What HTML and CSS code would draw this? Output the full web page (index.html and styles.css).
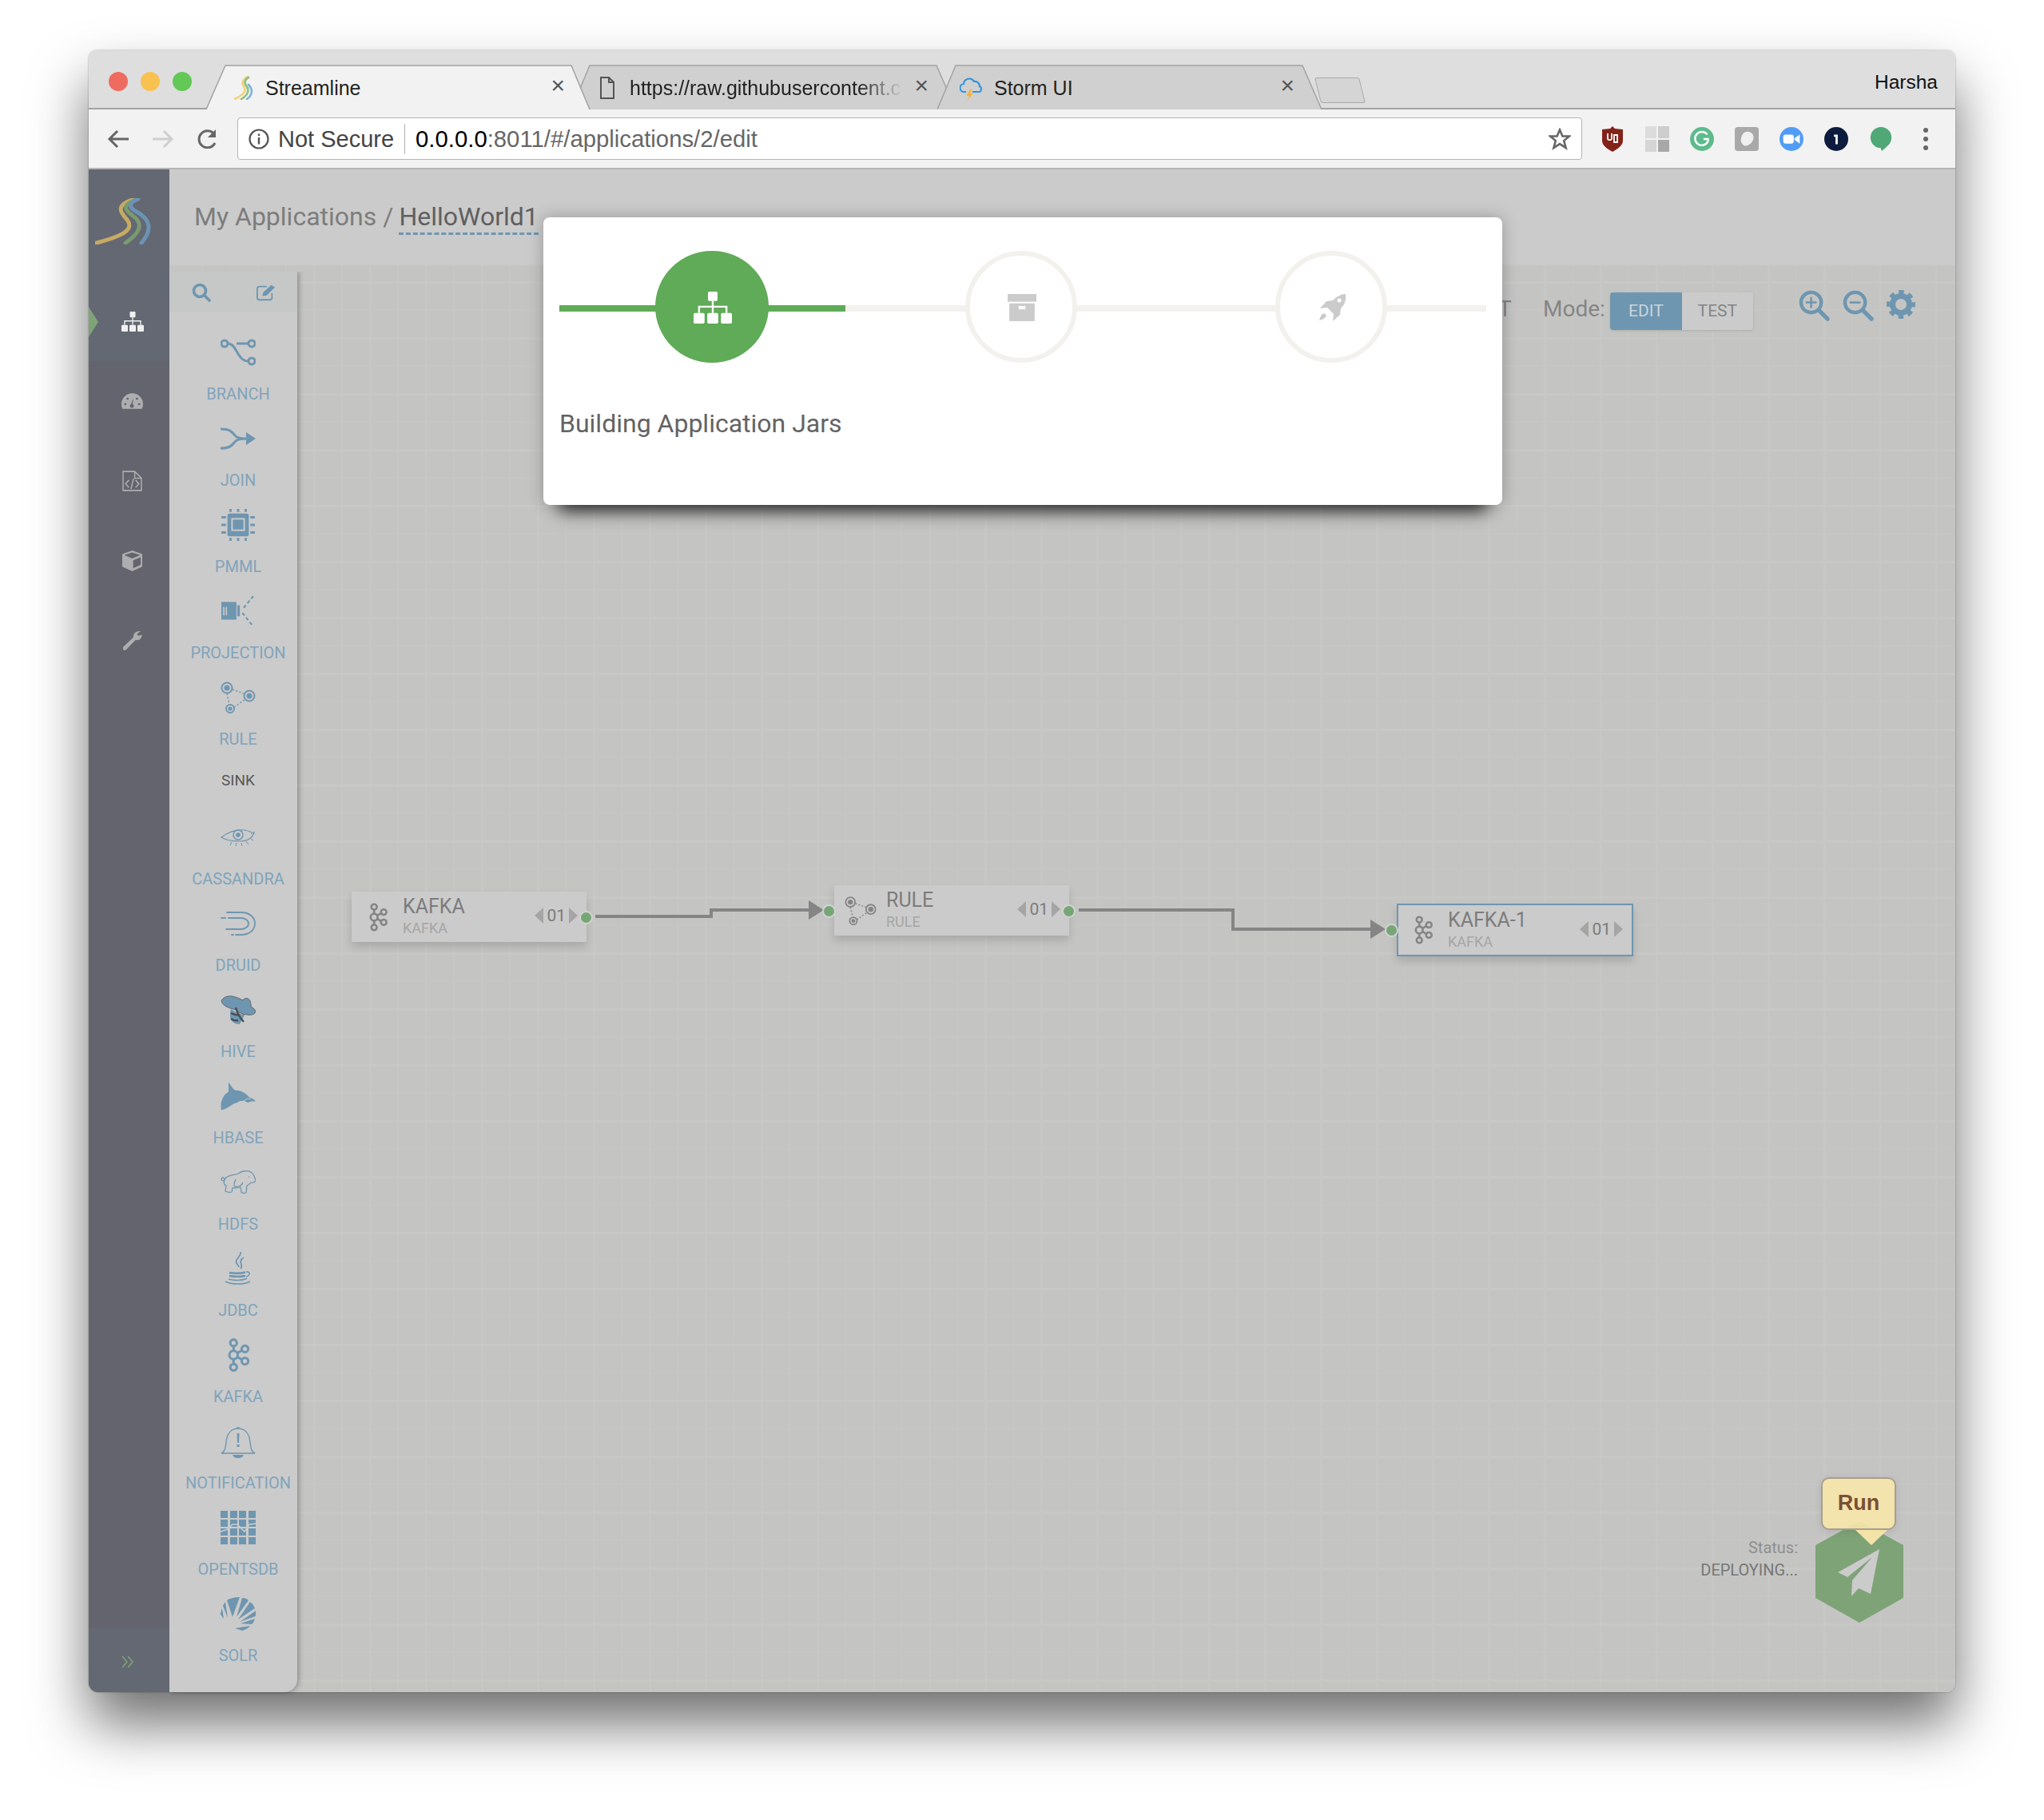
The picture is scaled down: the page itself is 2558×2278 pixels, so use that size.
FILE: index.html
```html
<!DOCTYPE html>
<html lang="en">
<head>
    <meta charset="UTF-8">
    <title>Streamline</title>
    <link rel="stylesheet" href="styles.css">
</head>
<body>
    <svg class="defs" width="0" height="0">
        <symbol id="kafka" viewBox="0 0 30 44">
            <g fill="none" stroke="currentColor" stroke-width="3.2">
                <circle cx="9" cy="6" r="4.300"/><circle cx="9" cy="22" r="5.500"/><circle cx="9" cy="38" r="4.300"/>
                <circle cx="24" cy="14" r="4.300"/><circle cx="24" cy="30" r="4.300"/>
                <path d="M9 10v7M9 27v7M13 20l7-4M13 24l7 4"/>
            </g>
        </symbol>
        <symbol id="rule" viewBox="0 0 44 40">
            <g fill="none" stroke="currentColor">
                <circle cx="8" cy="8" r="6.5" stroke-width="2"/><circle cx="36" cy="18" r="6.5" stroke-width="2"/><circle cx="12" cy="34" r="5" stroke-width="2"/>
                <path d="M15 10l14 5M8 15l3 13M17 32l13-9" stroke-width="1.6" stroke-dasharray="2 2.5"/>
            </g>
            <g fill="currentColor"><circle cx="8" cy="8" r="3.5"/><circle cx="36" cy="18" r="3.5"/><circle cx="12" cy="34" r="2.6"/></g>
        </symbol>
        <symbol id="sitemap" viewBox="0 0 28 24" preserveAspectRatio="none">
            <g fill="currentColor">
                <rect x="10.5" y="0" width="7" height="7" rx="1"/>
                <rect x="0" y="16" width="8" height="8" rx="1"/><rect x="10" y="16" width="8" height="8" rx="1"/><rect x="20" y="16" width="8" height="8" rx="1"/>
                <path d="M13.3 7h1.400v3.600H24.700V16h-1.400v-4H14.700v4h-1.400v-4H4.700v4H3.300V10.600h10z"/>
            </g>
        </symbol>
    </svg>

    <div class="window">
        <div class="tabstrip">
            <div class="lights">
                <span class="light red"></span>
                <span class="light yellow"></span>
                <span class="light green"></span>
            </div>
            <div class="tabs">
                <div class="tab active">
                    <svg class="shape" viewBox="0 0 482 56" preserveAspectRatio="none"><path d="M0 56h1L25 1h433l23 55h1" fill="#f2f2f2" stroke="#a3a3a3" stroke-width="1.5"/></svg>
                    <svg class="fav" viewBox="0 0 28 30">
                        <g fill="none" stroke-width="2.6" stroke-linecap="round">
                            <path d="M1 29C10 24 17 20 12 13 9 9 11 4 17 1" stroke="#f0d27a"/>
                            <path d="M9 29C17 24 20 18 15 12 12 8 14 4 18 2" stroke="#8cc07e"/>
                            <path d="M16 29C23 24 24 17 18 11" stroke="#7fb3dc"/>
                        </g>
                    </svg>
                    <span class="tab-title">Streamline</span>
                    <span class="tab-close">×</span>
                </div>
                <div class="tab second">
                    <svg class="shape" viewBox="0 0 482 56" preserveAspectRatio="none"><path d="M0 56L23 1h434l24 55" fill="#d0d0d0" stroke="#a3a3a3" stroke-width="1.5"/></svg>
                    <svg class="fav doc" viewBox="0 0 20 30"><path d="M2 2h10l6 6v20H2zM12 2v6h6" fill="none" stroke="#555" stroke-width="2"/></svg>
                    <span class="tab-title faded">https://raw.githubusercontent.c</span>
                    <span class="tab-close">×</span>
                </div>
                <div class="tab third">
                    <svg class="shape" viewBox="0 0 482 56" preserveAspectRatio="none"><path d="M0 56L23 1h434l24 55" fill="#d0d0d0" stroke="#a3a3a3" stroke-width="1.5"/></svg>
                    <svg class="fav cloud" viewBox="0 0 30 32">
                        <path d="M8 21H6a5 5 0 0 1-1-10 7 7 0 0 1 13-3 6 6 0 0 1 7 6 4 4 0 0 1 0 7h-9" fill="none" stroke="#2f95dc" stroke-width="2.2"/>
                        <path d="M13 18l-5 8h4l-3 6 8-9h-4l3-5z" fill="#f5b43c"/>
                    </svg>
                    <span class="tab-title">Storm UI</span>
                    <span class="tab-close">×</span>
                </div>
                <div class="newtab"></div>
            </div>
            <span class="profile">Harsha</span>
        </div>

        <div class="toolbar">
            <div class="navbtns">
                <svg viewBox="0 0 28 24"><path d="M27 12H3M13 2L3 12l10 10" fill="none" stroke="#666" stroke-width="3"/></svg>
                <svg viewBox="0 0 28 24"><path d="M1 12h24M15 2l10 10-10 10" fill="none" stroke="#cfcfcf" stroke-width="3"/></svg>
                <svg viewBox="0 0 28 24"><path d="M23 17a10.5 10.5 0 1 1-1-11" fill="none" stroke="#666" stroke-width="3"/><path d="M24 0v10H14z" fill="#666"/></svg>
            </div>
            <div class="omnibox">
                <svg class="info" viewBox="0 0 26 26"><circle cx="13" cy="13" r="11.5" fill="none" stroke="#555" stroke-width="2.2"/><path d="M11.8 11h2.4v8.5h-2.4zM11.8 6.500h2.400v2.500h-2.400z" fill="#555"/></svg>
                <span class="secure">Not Secure</span>
                <span class="url"><b>0.0.0.0</b>:8011/#/applications/2/edit</span>
                <svg class="star" viewBox="0 0 28 28"><path d="M14 2.500l3.400 8h8.600l-6.800 5.600 2.400 9-7.600-5-7.600 5 2.400-9L2 10.500h8.600z" fill="none" stroke="#666" stroke-width="2.600"/></svg>
            </div>
            <div class="extensions">
                <svg viewBox="0 0 30 32"><path d="M15 0l3 3 10 1v14c0 6-6 10-13 14C8 28 2 24 2 18V4l10-1z" fill="#82231a"/><path d="M9 9v7a3 3 0 0 0 5 0V9M17 11h4v9h-4z" fill="none" stroke="#fff" stroke-width="1.800"/></svg>
                <svg viewBox="0 0 30 32"><rect width="14" height="15" fill="#dcdcdc"/><rect x="16" width="14" height="15" fill="#cdcdcd"/><rect y="17" width="14" height="15" fill="#d5d5d5"/><rect x="16" y="17" width="14" height="15" fill="#a8a8a8"/></svg>
                <svg viewBox="0 0 32 32"><circle cx="16" cy="16" r="16" fill="#5dbb8d"/><path d="M23 10a9 9 0 1 0 1 9v-3h-6" fill="none" stroke="#fff" stroke-width="2.600"/></svg>
                <svg viewBox="0 0 32 32"><rect width="32" height="32" rx="4" fill="#a9a9a9"/><path d="M17 6c5 0 9 4 8 9-1 6-7 11-12 10-4-2-6-7-4-12 1-4 4-7 8-7z" fill="#f0f0f0"/></svg>
                <svg viewBox="0 0 32 32"><circle cx="16" cy="16" r="16" fill="#519df5"/><rect x="5" y="10" width="14" height="12" rx="3" fill="#fff"/><path d="M20 15l7-5v12l-7-5z" fill="#fff"/></svg>
                <svg viewBox="0 0 32 32"><circle cx="16" cy="16" r="16" fill="#0d1b3e"/><path d="M13 10h5v13h-3V13h-2z" fill="#fff"/></svg>
                <svg viewBox="0 0 32 32"><circle cx="16" cy="14" r="14" fill="#4fa876"/><path d="M15 26h9l-7 6z" fill="#4fa876"/></svg>
                <svg class="menu-dots" viewBox="0 0 8 30"><g fill="#666"><circle cx="4" cy="4" r="3"/><circle cx="4" cy="15" r="3"/><circle cx="4" cy="26" r="3"/></g></svg>
            </div>
        </div>

        <div class="app">
            <nav class="nav">
                <div class="logo">
                    <svg viewBox="0 0 72 58">
                        <g fill="none" stroke-linecap="round">
                            <path d="M2 56C24 50 52 42 40 27 30 16 26 8 50 1" stroke="#c6ab63" stroke-width="5"/>
                            <path d="M38 56C56 44 62 32 46 21 36 14 34 8 52 2" stroke="#7a9a70" stroke-width="5"/>
                            <path d="M58 56C72 40 70 26 50 16 42 11 42 6 54 1" stroke="#6b93b5" stroke-width="5"/>
                        </g>
                    </svg>
                </div>
                <div class="nav-item current"><svg class="i-site"><use href="#sitemap"/></svg></div>
                <div class="nav-item">
                    <svg viewBox="0 0 28 20"><path d="M14 0a14 14 0 0 1 14 14c0 3-1 5-1.500 6H1.500C1 19 0 17 0 14A14 14 0 0 1 14 0z" fill="currentColor"/><path d="M15.500 6l-1 8a2.500 2.500 0 1 1-2 0z" fill="#64646e"/><g fill="#64646e"><circle cx="5" cy="14" r="1.500"/><circle cx="8" cy="7" r="1.500"/><circle cx="20" cy="7" r="1.500"/><circle cx="23" cy="14" r="1.500"/></g></svg>
                </div>
                <div class="nav-item">
                    <svg class="nav-tall" viewBox="0 0 24 22" preserveAspectRatio="none"><path d="M1 1h14l8 7v13H1zM15 1v7h8" fill="none" stroke="currentColor" stroke-width="1.400"/><path d="M8 10l-4 4 4 4M16 10l4 4-4 4M13.500 8.500l-3 11" fill="none" stroke="currentColor" stroke-width="1.400"/></svg>
                </div>
                <div class="nav-item">
                    <svg class="nav-tall" viewBox="0 0 26 20" preserveAspectRatio="none"><path d="M13 0l13 3.500v12L13 20 0 15.500v-12zM2.500 4.500L13 7.700 23.500 4.500 13 2zM14.200 9.500v7.700l9.800-3.300V6.600z" fill="currentColor" fill-rule="evenodd"/></svg>
                </div>
                <div class="nav-item">
                    <svg class="nav-tall" viewBox="0 0 26 22" preserveAspectRatio="none"><path d="M25.500 4.500c.5 3.500-3.500 7-8 5.500L5 20.500c-2.500 2-5.500-1-3.500-3.200L14.500 7.500C14 3.500 18 0 24 1c-2 .8-4.500 2-4.500 3.200 0 1.400 2.500 2 6 .3z" fill="currentColor"/></svg>
                </div>
                <div class="nav-bottom">
                    <svg viewBox="0 0 16 16"><path d="M1 1l6 7-6 7M8 1l6 7-6 7" fill="none" stroke="#7ea377" stroke-width="1.600"/></svg>
                </div>
            </nav>

            <main class="main">
                <header class="crumbs">
                    <span class="crumb-root">My Applications /</span>
                    <span class="crumb-name">HelloWorld1</span>
                </header>

                <div class="canvas">
                    <aside class="palette">
                        <div class="palette-search">
                            <svg viewBox="0 0 24 24"><circle cx="10" cy="10" r="7.500" fill="none" stroke="currentColor" stroke-width="3.600"/><path d="M15.500 15.500L22 22" stroke="currentColor" stroke-width="3.600" stroke-linecap="round"/></svg>
                            <svg viewBox="0 0 26 22"><path d="M14 3H4a3 3 0 0 0-3 3v12a3 3 0 0 0 3 3h14a3 3 0 0 0 3-3v-6" fill="none" stroke="currentColor" stroke-width="2"/><path d="M8 16l1-5L20 1l5 3-11 11z" fill="currentColor"/></svg>
                        </div>
                        <div class="palette-list">
                            <div class="tool">
                                <svg viewBox="0 0 44 34"><g fill="none" stroke="currentColor" stroke-width="3"><circle cx="5" cy="6" r="4"/><circle cx="39" cy="6" r="4"/><circle cx="39" cy="28" r="4"/><path d="M9 6c12 0 11 22 26 22M20 6h15"/></g></svg>
                                <span>BRANCH</span>
                            </div>
                            <div class="tool">
                                <svg viewBox="0 0 44 28"><path d="M1 2c10 0 13 3 17 8 2 3 6 4 16 4M1 26c10 0 13-3 17-8 2-3 6-4 16-4" fill="none" stroke="currentColor" stroke-width="3" stroke-linecap="round"/><path d="M32 6l12 8-12 8z" fill="currentColor"/></svg>
                                <span>JOIN</span>
                            </div>
                            <div class="tool">
                                <svg viewBox="0 0 44 42"><rect x="8" y="6" width="28" height="30" rx="3" fill="currentColor"/><rect x="14" y="13" width="16" height="15" fill="none" stroke="#cbcbcb" stroke-width="2"/><g stroke="currentColor" stroke-width="3"><path d="M12 0v4M22 0v4M32 0v4M12 38v4M22 38v4M32 38v4M0 11h6M0 21h6M0 31h6M38 11h6M38 21h6M38 31h6"/></g></svg>
                                <span>PMML</span>
                            </div>
                            <div class="tool">
                                <svg viewBox="0 0 40 38"><rect x="0" y="8" width="18" height="21" fill="currentColor"/><rect x="19" y="12" width="3" height="13" fill="currentColor"/><path d="M3 14v10M6 14v10" stroke="#cbcbcb" stroke-width="1.500"/><path d="M38 1L25 17M25 21l13 16" fill="none" stroke="currentColor" stroke-width="2" stroke-dasharray="4 3"/></svg>
                                <span>PROJECTION</span>
                            </div>
                            <div class="tool">
                                <svg><use href="#rule"/></svg>
                                <span>RULE</span>
                            </div>
                            <div class="palette-title">SINK</div>
                            <div class="tool">
                                <svg viewBox="0 0 44 24"><path d="M1 12C10 5 20 2 30 3c5 .5 9 3 12 4-3 7-9 10-18 10C14 17 6 15 1 12z" fill="none" stroke="currentColor" stroke-width="1.200"/><circle cx="22" cy="9" r="6" fill="none" stroke="currentColor" stroke-width="1.500"/><circle cx="22" cy="9" r="2.800" fill="currentColor"/><path d="M14 18l-2 4M20 19l-1 4M26 19l1 4M32 17l3 4M37 13l4 3M38 8l5-3" stroke="currentColor"/></svg>
                                <span>CASSANDRA</span>
                            </div>
                            <div class="tool">
                                <svg viewBox="0 0 44 30"><g fill="none" stroke="currentColor" stroke-width="1.800" stroke-linecap="round"><path d="M8 1h18c10 0 17 6 17 14s-7 14-17 14h-7M1 8h5M10 8h15c6 0 10 3 10 7s-4 7-10 7H7M14 29h2"/></g></svg>
                                <span>DRUID</span>
                            </div>
                            <div class="tool">
                                <svg viewBox="0 0 44 38">
                                    <path d="M1 8c2-5 8-7 14-6 5 1 9 3 13 5 2-4 8-3 9 1 1 3 1 6 2 8 3 1 6 4 4 7-2 2-6 3-10 2-6 0-10-3-14-6C12 17 3 15 1 8z" fill="currentColor" stroke="#555" stroke-width=".8"/>
                                    <path d="M13 18c6 4 11 7 17 7-1 4-4 7-6 12-6 0-11-3-12-9 0-4 0-7 1-10z" fill="currentColor"/>
                                    <path d="M19 16c2 7 5 13 10 18M13 23c4 2 8 3 11 2M13 30c3 2 6 3 9 2" fill="none" stroke="#4a4c50" stroke-width="2.400"/>
                                </svg>
                                <span>HIVE</span>
                            </div>
                            <div class="tool">
                                <svg viewBox="0 0 44 35"><path d="M1 35C-1 25 3 16 10 12L10 0c3 4 5 8 8 10 8 0 14 4 18 9 3 1 6 2 8 5h-6c-2 2-6 2-8-1-4 0-8 1-10 3-6 1-10 7-19 9z" fill="currentColor"/><path d="M30 23c2-2 5-3 8-2" stroke="#cbcbcb" fill="none"/></svg>
                                <span>HBASE</span>
                            </div>
                            <div class="tool">
                                <svg viewBox="0 0 44 32"><g fill="none" stroke="currentColor" stroke-width="1.300"><path d="M6 11c4-5 12-4 16-6 5-4 12-4 16-2 4 2 5 8 6 10-1 3-4 4-6 3-1 2-3 3-5 4l-1 9c-3 1-5 0-6-1l-1-6c-3 1-7 1-10 1-1 2 0 4-1 5-3 1-6 0-8-1l1-7C3 18 4 14 6 11z"/><path d="M19 12c-1 4-4 7-1 9 4 1 9-1 10-5M35 9l1 .1"/><circle cx="3" cy="12" r="2"/></g></svg>
                                <span>HDFS</span>
                            </div>
                            <div class="tool">
                                <svg class="tall" viewBox="0 0 34 42"><g fill="none" stroke="currentColor"><path d="M20 0c2 5-8 9-5 14 1 2 3 3 3 5M24 7c-5 3-4 6-3 9 .6 2 0 4-1 5" stroke-width="1.800"/><path d="M6 26c6 1 14 1 20-.5M6 30c6 1 14 1 20 0" stroke-width="2.400"/><path d="M5 34c6 2 18 2 23-1M1 37c8 4 24 4 31 0" stroke-width="1.500"/><path d="M27 25c5-1 6 4 0 6" stroke-width="1.500"/></g></svg>
                                <span>JDBC</span>
                            </div>
                            <div class="tool">
                                <svg class="tall"><use href="#kafka"/></svg>
                                <span>KAFKA</span>
                            </div>
                            <div class="tool">
                                <svg class="tall" viewBox="0 0 44 42"><path d="M1 36c4-2 5-5 6-14C8 12 13 5 22 5s14 7 15 17c1 9 2 12 6 14z" fill="none" stroke="currentColor" stroke-width="1.400"/><path d="M20 5a2 2 0 0 1 4 0M15 38h14c-1 3-4 4-7 4s-6-1-7-4zM20.500 11h3l-.5 12h-2zM20.500 25h3v3h-3z" fill="currentColor"/></svg>
                                <span>NOTIFICATION</span>
                            </div>
                            <div class="tool">
                                <svg class="tall" viewBox="0 0 44 42"><g fill="currentColor"><rect x="0" y="0" width="9" height="9"/><rect x="12" y="0" width="9" height="9"/><rect x="23" y="0" width="9" height="9"/><rect x="35" y="0" width="9" height="9"/><rect x="0" y="11" width="9" height="9"/><rect x="12" y="11" width="9" height="9"/><rect x="23" y="11" width="9" height="9"/><rect x="35" y="11" width="9" height="9"/><rect x="0" y="22" width="9" height="9"/><rect x="12" y="22" width="9" height="9"/><rect x="23" y="22" width="9" height="9"/><rect x="35" y="22" width="9" height="9"/><rect x="0" y="33" width="9" height="9"/><rect x="12" y="33" width="9" height="9"/><rect x="23" y="33" width="9" height="9"/><rect x="35" y="33" width="9" height="9"/></g><path d="M0 26l9-3 6-6h6l9 9 6-9 8-1" fill="none" stroke="#cbcbcb" stroke-width="1.500"/></svg>
                                <span>OPENTSDB</span>
                            </div>
                            <div class="tool">
                                <svg class="tall" viewBox="0 0 44 42"><g fill="currentColor"><path d="M8 4C13 1 18 0 24 0l-9 25zM27 1c3 0 6 1 8 3L20 25zM37 6c3 2 5 5 6 8L22 28zM44 17c.3 2 .2 5-.3 7L24 31zM43 27c-1 3-2 5-4 7l-14-1zM37 36c-2 3-6 5-10 6l-9-3 19-3zM6 6c-1 1-2 3-3 5l6 15zM2 14c-1 2-2 5-2 8l4 5z"/></g></svg>
                                <span>SOLR</span>
                            </div>
                        </div>
                    </aside>

                    <div class="mode-cut">T</div>
                    <div class="mode">
                        <span class="mode-label">Mode:</span>
                        <div class="mode-toggle">
                            <span class="mode-btn on">EDIT</span>
                            <span class="mode-btn">TEST</span>
                        </div>
                    </div>
                    <div class="zoom-tools">
                        <svg viewBox="0 0 40 40"><circle cx="16" cy="16" r="13" fill="none" stroke="currentColor" stroke-width="4.500"/><path d="M26 26l11 11" stroke="currentColor" stroke-width="5.500" stroke-linecap="round"/><path d="M16 9v14M9 16h14" stroke="currentColor" stroke-width="2.600"/></svg>
                        <svg viewBox="0 0 40 40"><circle cx="16" cy="16" r="13" fill="none" stroke="currentColor" stroke-width="4.500"/><path d="M26 26l11 11" stroke="currentColor" stroke-width="5.500" stroke-linecap="round"/><path d="M9 16h14" stroke="currentColor" stroke-width="2.600"/></svg>
                        <svg viewBox="0 0 36 36"><g fill="none" stroke="currentColor"><circle cx="18" cy="18" r="10.500" stroke-width="7"/><circle cx="18" cy="18" r="15.500" stroke-width="5" stroke-dasharray="6.500 5.670" stroke-dashoffset="3.250"/></g></svg>
                    </div>

                    <svg class="links" viewBox="0 0 1000 120">
                        <path d="M0 35H145V27H267" fill="none" stroke="#858585" stroke-width="4"/>
                        <path d="M267 15l19 12-19 12z" fill="#858585"/>
                        <path d="M605 27H798V51H970" fill="none" stroke="#858585" stroke-width="4"/>
                        <path d="M970 39l19 12-19 12z" fill="#858585"/>
                    </svg>

                    <div class="node kafka-a">
                        <svg class="node-icon"><use href="#kafka"/></svg>
                        <div class="node-text"><div class="node-name">KAFKA</div><div class="node-type">KAFKA</div></div>
                        <div class="node-count"><i class="tri left"></i>01<i class="tri right"></i></div>
                        <i class="port out"></i>
                    </div>
                    <div class="node rule-a">
                        <i class="port in"></i>
                        <svg class="node-icon wide"><use href="#rule"/></svg>
                        <div class="node-text"><div class="node-name">RULE</div><div class="node-type">RULE</div></div>
                        <div class="node-count"><i class="tri left"></i>01<i class="tri right"></i></div>
                        <i class="port out"></i>
                    </div>
                    <div class="node kafka-b">
                        <i class="port in"></i>
                        <svg class="node-icon"><use href="#kafka"/></svg>
                        <div class="node-text"><div class="node-name">KAFKA-1</div><div class="node-type">KAFKA</div></div>
                        <div class="node-count"><i class="tri left"></i>01<i class="tri right"></i></div>
                    </div>

                    <div class="deploy">
                        <div class="status">
                            <div class="status-label">Status:</div>
                            <div class="status-value">DEPLOYING...</div>
                        </div>
                        <div class="hex">
                            <svg viewBox="0 0 110 127"><path d="M55 0l55 30v66l-55 31L0 96V30z" fill="#7ea377"/><path d="M80 35L28 64l12 6 31-25-25 29-1 20 9-10 15 7z" fill="#cbcbcb"/></svg>
                            <div class="run-tip">Run</div>
                        </div>
                    </div>
                </div>
            </main>

            <div class="modal">
                <div class="steps">
                    <div class="step-line"><div class="step-fill"></div></div>
                    <div class="step done">
                        <svg class="step-site"><use href="#sitemap"/></svg>
                    </div>
                    <div class="step">
                        <svg viewBox="0 0 34 32"><rect width="34" height="9" fill="#cbcbcb"/><path d="M2 11h30v21H2z" fill="#cbcbcb"/><rect x="13" y="14" width="8" height="4" fill="#fff"/></svg>
                    </div>
                    <div class="step">
                        <svg viewBox="0 0 36 36"><path d="M35 1c1 7-1 13-6 18l-1 8-9 8 1-9-8-8-9 1 8-9 8-1C24 4 29 1 35 1zM8 25c-3 1-5 4-6 9 5-1 8-3 9-6z" fill="#cbcbcb"/><circle cx="27" cy="9" r="2.500" fill="#fff"/></svg>
                    </div>
                </div>
                <div class="modal-text">Building Application Jars</div>
            </div>
        </div>
    </div>
</body>
</html>
```

FILE: styles.css
```css
html, body {
    margin: 0;
    background: #fff;
}
body {
    width: 2558px;
    height: 2278px;
    overflow: hidden;
    font-family: Roboto, "Liberation Sans", sans-serif;
}
.defs {
    position: absolute;
}
.window {
    width: 2336px;
    height: 2055px;
    margin: 63px 0 0 111px;
    border-radius: 10px 10px 12px 12px;
    box-shadow: 0 0 2px rgba(0,0,0,0.4), 0 40px 70px rgba(0,0,0,0.56);
    display: flex;
    flex-direction: column;
    position: relative;
}

/* browser chrome */
.tabstrip {
    height: 74px;
    flex: none;
    background: #dedede;
    border-radius: 10px 10px 0 0;
    border-bottom: 2px solid #a3a3a3;
    box-sizing: border-box;
    display: flex;
    position: relative;
}
.lights {
    width: 146px;
    padding: 27px 0 0 25px;
    box-sizing: border-box;
    display: flex;
    gap: 16px;
    flex: none;
}
.light {
    width: 24px;
    height: 24px;
    border-radius: 50%;
}
.red { background: #ee6b60; }
.yellow { background: #f8c150; }
.green { background: #63c856; }
.tabs {
    position: absolute;
    left: 146px;
    top: 18px;
    height: 56px;
    display: flex;
}
.tab {
    width: 482px;
    height: 56px;
    position: relative;
    margin-right: -24px;
    display: flex;
    align-items: center;
    font-family: "Liberation Sans", sans-serif;
    font-size: 25px;
    color: #222;
    padding-top: 2px;
    box-sizing: border-box;
}
.tab.active {
    z-index: 2;
}
.shape {
    position: absolute;
    inset: 0;
    width: 100%;
    height: 100%;
}
.fav {
    position: relative;
    width: 28px;
    height: 30px;
    margin-left: 36px;
    flex: none;
}
.fav.doc { width: 20px; height: 30px; margin-left: 35px; }
.fav.cloud { width: 30px; height: 32px; margin-left: 28px; }
.tab-title {
    position: relative;
    margin-left: 11px;
    white-space: nowrap;
    width: 349px;
    overflow: hidden;
}
.second .tab-title { margin-left: 18px; }
.third .tab-title { margin-left: 13px; }
.faded {
    -webkit-mask-image: linear-gradient(90deg, #000 82%, transparent 98%);
    mask-image: linear-gradient(90deg, #000 82%, transparent 98%);
}
.tab-close {
    position: absolute;
    right: 32px;
    top: 11px;
    font-size: 30px;
    color: #555;
    line-height: 30px;
}
.second .tab-close, .third .tab-close {
    right: 35px;
}
.newtab {
    width: 54px;
    height: 30px;
    margin: 16px 0 0 18px;
    background: #d5d5d5;
    border: 1.5px solid #a9a9a9;
    border-radius: 3px;
    transform: skewX(14deg);
    position: relative;
}
.profile {
    position: absolute;
    right: 22px;
    top: 26px;
    font-family: "Liberation Sans", sans-serif;
    font-size: 24.5px;
    color: #111;
}

.toolbar {
    height: 75px;
    flex: none;
    background: #f2f2f2;
    border-bottom: 2px solid #b5b5b5;
    box-sizing: border-box;
    display: flex;
    align-items: center;
}
.navbtns {
    display: flex;
    gap: 28px;
    padding-left: 23px;
    width: 186px;
    box-sizing: border-box;
    flex: none;
}
.navbtns svg {
    width: 28px;
    height: 24px;
}
.omnibox {
    width: 1683px;
    height: 53px;
    background: #fff;
    border: 1.5px solid #b5b5b5;
    border-radius: 4px;
    box-sizing: border-box;
    display: flex;
    align-items: center;
    font-family: "Liberation Sans", sans-serif;
    font-size: 29px;
    color: #666;
    flex: none;
}
.info {
    width: 26px;
    height: 26px;
    margin-left: 13px;
}
.secure {
    margin-left: 11px;
    color: #444;
    padding-right: 13px;
    border-right: 1.5px solid #b0b0b0;
    line-height: 38px;
}
.url {
    margin-left: 13px;
    font-size: 29.3px;
}
.url b {
    font-weight: normal;
    color: #000;
}
.star {
    width: 28px;
    height: 28px;
    margin-left: auto;
    margin-right: 13px;
}
.extensions {
    display: flex;
    align-items: center;
    gap: 26px;
    padding-left: 23px;
}
.extensions svg {
    width: 30px;
    height: 32px;
}
.extensions .menu-dots {
    width: 8px;
    height: 30px;
    margin-left: 11px;
}

/* app shell */
.app {
    flex: 1;
    display: flex;
    position: relative;
    min-height: 0;
}
.nav {
    width: 101px;
    flex: none;
    background: #64646e;
    border-radius: 0 0 0 12px;
    display: flex;
    flex-direction: column;
    color: #aeaeb0;
}
.logo {
    height: 140px;
    flex: none;
    background: #646873;
    padding: 36px 0 0 8px;
    box-sizing: border-box;
}
.logo svg {
    width: 72px;
    height: 58px;
}
.nav-item {
    height: 100px;
    flex: none;
    display: flex;
    align-items: center;
    justify-content: center;
    padding-left: 8px;
    box-sizing: border-box;
}
.nav-item svg {
    width: 27px;
    height: 22px;
}
.nav-item .i-site {
    width: 28px;
    height: 25px;
}
.nav-item .nav-tall {
    width: 25px;
    height: 26px;
}
.nav-item.current {
    background: #646873;
    color: #f0f0f0;
    position: relative;
}
.nav-item.current::before {
    content: "";
    position: absolute;
    left: 0;
    top: 32px;
    border-left: 12px solid #7ea377;
    border-top: 19px solid transparent;
    border-bottom: 19px solid transparent;
}
.nav-bottom {
    margin-top: auto;
    height: 80px;
    background: #646873;
    border-radius: 0 0 0 12px;
    padding: 34px 0 0 41px;
    box-sizing: border-box;
}
.nav-bottom svg {
    width: 16px;
    height: 16px;
}
.main {
    flex: 1;
    min-width: 0;
    display: flex;
    flex-direction: column;
    background: #cbcbcb;
    border-radius: 0 0 12px 0;
}
.crumbs {
    height: 120px;
    flex: none;
    padding: 35px 0 0 31px;
    box-sizing: border-box;
    font-size: 32px;
    line-height: 48px;
    color: #7d7d7d;
    display: flex;
    align-items: flex-start;
    gap: 7px;
}
.crumb-name {
    color: #5f5f5f;
    border-bottom: 3px dashed #6f96b0;
    height: 44px;
    line-height: 48px;
}

/* canvas */
.canvas {
    flex: 1;
    position: relative;
    border-radius: 0 0 12px 0;
    background-color: #c4c5c3;
    background-image:
        linear-gradient(#c8c8c7 3px, transparent 3px),
        linear-gradient(90deg, #c7c7c6 3px, transparent 3px),
        linear-gradient(#c6c6c5 2px, transparent 2px),
        linear-gradient(90deg, #c6c6c5 2px, transparent 2px);
    background-size: 70px 70px, 70px 70px, 35px 35px, 35px 35px;
    background-position: 40px 20px;
}
.palette {
    width: 160px;
    height: calc(100% - 8px);
    margin-top: 8px;
    background: #cbcbcb;
    border-radius: 0 0 16px 0;
    box-shadow: 2px 0 6px rgba(0,0,0,0.3);
    clip-path: inset(0 -12px -12px 0);
    color: #6f96b0;
    display: flex;
    flex-direction: column;
}
.palette-search {
    height: 51px;
    flex: none;
    background: #c5c8c7;
    display: flex;
    align-items: center;
    justify-content: space-between;
    padding: 0 27px 0 28px;
    box-sizing: border-box;
}
.palette-search svg {
    width: 24px;
    height: 24px;
}
.palette-list {
    padding: 10px 0 0 12px;
    display: flex;
    flex-direction: column;
}
.tool {
    height: 108px;
    box-sizing: border-box;
    padding-top: 22px;
    position: relative;
    display: flex;
    justify-content: center;
}
.tool svg {
    width: 44px;
    height: 40px;
    margin-top: -2px;
}
.tool svg.tall {
    height: 42px;
    margin-top: -3px;
}
.tool span {
    position: absolute;
    left: -20px;
    right: -20px;
    top: 81px;
    text-align: center;
    font-size: 20px;
    line-height: 22px;
    color: #80a4bb;
}
.palette-title {
    height: 67px;
    padding-top: 25px;
    box-sizing: border-box;
    text-align: center;
    font-size: 19px;
    line-height: 22px;
    color: #585858;
}

/* mode switch and zoom */
.mode-cut {
    position: absolute;
    left: 1663px;
    top: 34px;
    font-size: 28px;
    color: #858585;
    line-height: 42px;
}
.mode {
    position: absolute;
    left: 1719px;
    top: 34px;
    display: flex;
    gap: 6px;
    color: #858585;
    font-size: 28px;
    line-height: 42px;
}
.mode-toggle {
    display: flex;
    height: 47px;
    border-radius: 4px;
    overflow: hidden;
    font-size: 21px;
    background: #cbcbcb;
    box-shadow: 0 1px 3px rgba(0,0,0,0.12);
}
.mode-btn {
    width: 89px;
    text-align: center;
    line-height: 47px;
    color: #858585;
}
.mode-btn.on {
    width: 90px;
    background: #6f96b0;
    color: #c8d5de;
}
.zoom-tools {
    position: absolute;
    left: 2039px;
    top: 31px;
    display: flex;
    gap: 16px;
    color: #6f96b0;
}
.zoom-tools svg {
    width: 39px;
    height: 39px;
}
.zoom-tools svg:last-child {
    width: 36px;
    height: 36px;
}

/* graph */
.links {
    position: absolute;
    left: 533px;
    top: 780px;
    width: 1000px;
    height: 120px;
    overflow: visible;
}
.node {
    position: absolute;
    width: 294px;
    height: 63px;
    background: #cbcbcb;
    box-shadow: 0 6px 10px rgba(0,0,0,0.14);
    display: flex;
    align-items: center;
    box-sizing: border-box;
    padding-left: 21px;
}
.kafka-a { left: 228px; top: 784px; }
.rule-a { left: 832px; top: 776px; }
.kafka-b {
    left: 1536px;
    top: 799px;
    width: 296px;
    height: 66px;
    border: 2px solid #6f96b0;
    padding-left: 19px;
}
.node-icon {
    width: 24px;
    height: 38px;
    color: #858585;
    flex: none;
}
.node-icon.wide {
    width: 40px;
    height: 38px;
    margin-left: -8px;
}
.node-text {
    margin-left: 19px;
    padding-top: 3px;
    flex: 1;
}
.node-icon.wide + .node-text {
    margin-left: 12px;
}
.node-name {
    font-size: 25px;
    line-height: 26px;
    color: #7c7c7c;
}
.node-type {
    font-size: 18px;
    line-height: 28px;
    color: #a5a5a5;
}
.node-count {
    display: flex;
    align-items: center;
    gap: 4px;
    font-size: 21px;
    color: #7c7c7c;
    margin: -3px 11px 0 0;
}
.tri {
    width: 0;
    height: 0;
    border-top: 10px solid transparent;
    border-bottom: 10px solid transparent;
}
.tri.left { border-right: 11px solid #a5a5a5; }
.tri.right { border-left: 11px solid #a5a5a5; }
.port {
    position: absolute;
    width: 13px;
    height: 13px;
    background: #76a676;
    border-radius: 50%;
    border: 2px solid #d0d2d0;
    top: 50%;
    margin-top: -8px;
}
.port.out { right: -8px; }
.port.in { left: -15px; }
.kafka-b .port.in { left: -17px; }

/* run button */
.deploy {
    position: absolute;
    right: 65px;
    bottom: 87px;
    display: flex;
    align-items: flex-start;
    gap: 22px;
}
.status {
    text-align: right;
    font-size: 20px;
    line-height: 28px;
    margin-top: 19px;
}
.status-label { color: #8f8f8f; }
.status-value { color: #777; }
.hex {
    width: 110px;
    height: 127px;
    position: relative;
}
.hex svg {
    width: 110px;
    height: 127px;
    display: block;
}
.run-tip {
    position: absolute;
    left: 7px;
    top: -55px;
    width: 94px;
    height: 66px;
    background: rgba(246,229,170,0.92);
    border: 2px solid #aa9e8e;
    border-radius: 10px;
    box-sizing: border-box;
    text-align: center;
    font-family: "Liberation Sans", sans-serif;
    font-weight: bold;
    font-size: 27px;
    line-height: 60px;
    color: #7a5034;
    box-shadow: 0 2px 10px rgba(0,0,0,0.1);
}
.run-tip::after {
    content: "";
    position: absolute;
    left: 41px;
    top: 64px;
    border-top: 19px solid #f3e3a8;
    border-left: 20px solid transparent;
    border-right: 20px solid transparent;
}

/* deploy progress */
.modal {
    position: absolute;
    left: 569px;
    top: 60px;
    width: 1200px;
    height: 360px;
    background: #fff;
    border-radius: 8px;
    box-sizing: border-box;
    padding: 42px 20px 0;
    box-shadow: 0 0 20px rgba(0,0,0,0.25), 0 28px 20px -20px rgba(0,0,0,0.75);
    z-index: 5;
}
.steps {
    position: relative;
    height: 140px;
    display: flex;
    justify-content: flex-start;
    gap: 248px;
    padding-left: 120px;
}
.step-line {
    position: absolute;
    left: 0;
    top: 68px;
    width: 1160px;
    height: 8px;
    background: #f2f1ed;
}
.step-fill {
    width: 358px;
    height: 8px;
    background: #5fab57;
}
.step {
    position: relative;
    width: 140px;
    height: 140px;
    padding: 2px 0 0 2px;
    border: 6px solid #f2f1ed;
    border-radius: 50%;
    background: #fff;
    box-sizing: border-box;
    display: flex;
    align-items: center;
    justify-content: center;
}
.step svg {
    width: 36px;
    height: 36px;
}
.step.done {
    width: 142px;
    margin-right: -2px;
    background: #5fab57;
    border-color: #5fab57;
    color: #fff;
}
.step svg.step-site {
    width: 48px;
    height: 40px;
}
.modal-text {
    margin-top: 57px;
    font-size: 32px;
    line-height: 38px;
    color: #636363;
}
```
